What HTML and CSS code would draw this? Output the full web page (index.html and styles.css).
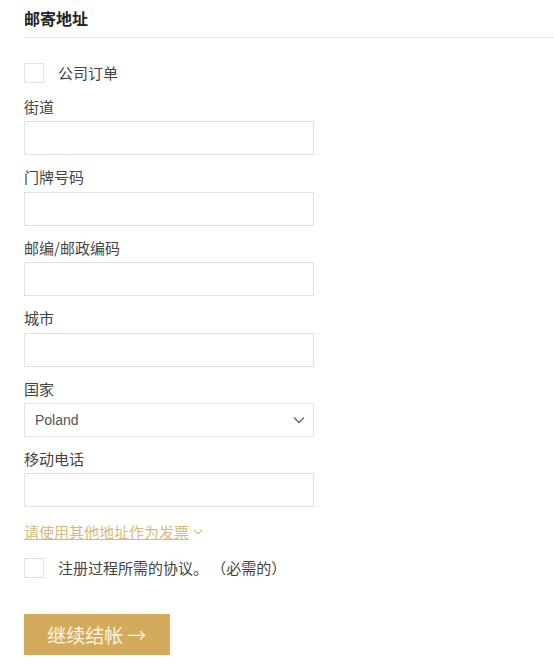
FILE: index.html
```html
<!DOCTYPE html>
<html lang="zh">
<head>
    <meta charset="UTF-8">
    <meta name="viewport" content="width=device-width, initial-scale=1.0">
    <title>邮寄地址</title>
    <link rel="stylesheet" href="styles.css">
</head>
<body>
    <div class="container">
        <h2 class="section-title">邮寄地址</h2>

        <form id="address-form">
            <label class="check-row company">
                <span class="box"></span>
                <span>公司订单</span>
            </label>

            <div class="field">
                <label>街道</label>
                <input type="text">
            </div>
            <div class="field">
                <label>门牌号码</label>
                <input type="text">
            </div>
            <div class="field">
                <label>邮编/邮政编码</label>
                <input type="text">
            </div>
            <div class="field">
                <label>城市</label>
                <input type="text">
            </div>
            <div class="field">
                <label>国家</label>
                <div class="select">
                    <span>Poland</span>
                    <svg width="12" height="8" viewBox="0 0 12 8"><path d="M1 1.5l5 5 5-5" fill="none" stroke="#666" stroke-width="1.3"/></svg>
                </div>
            </div>
            <div class="field">
                <label>移动电话</label>
                <input type="text">
            </div>

            <a class="invoice-link" href="#"><span>请使用其他地址作为发票</span>
                <svg width="10" height="6" viewBox="0 0 10 6"><path d="M1 1l4 4 4-4" fill="none" stroke="#d9b97a" stroke-width="1.1"/></svg>
            </a>

            <label class="check-row terms">
                <span class="box"></span>
                <span>注册过程所需的协议。 （必需的）</span>
            </label>

            <button type="submit">继续结帐 →</button>
        </form>
    </div>
</body>
</html>
```

FILE: styles.css
```css
body {
    font-family: "Noto Sans CJK SC", "Noto Sans", sans-serif;
    background-color: #fff;
    color: #333;
    margin: 0;
}

.container {
    padding-left: 24px;
}

.section-title {
    font-size: 16px;
    font-weight: bold;
    line-height: 22px;
    color: #222;
    margin: 0;
    padding: 7px 0 8px;
    border-bottom: 1px solid #e6e6e6;
}

.check-row {
    display: flex;
    align-items: center;
    gap: 14px;
    font-size: 15px;
    color: #444;
}

.company {
    margin: 24px 0 14px;
}

.box {
    width: 18px;
    height: 18px;
    border: 1px solid #e2e2e2;
    background: #fff;
}

.field {
    margin-bottom: 12px;
}

.field label {
    display: block;
    font-size: 15px;
    line-height: 20.4px;
    color: #444;
    margin-bottom: 4px;
}

.field input,
.select {
    box-sizing: border-box;
    width: 290px;
    height: 34px;
    border: 1px solid #e2e2e2;
    margin: 0;
    padding: 0 10px;
}

.select {
    display: flex;
    align-items: center;
    justify-content: space-between;
    font-family: "Liberation Sans", Arial, sans-serif;
    font-size: 14px;
    color: #555;
    padding-right: 8px;
}

.invoice-link {
    display: inline-flex;
    align-items: center;
    gap: 4px;
    font-size: 15px;
    color: #d9b97a;
}

.invoice-link span {
    text-decoration: underline;
}

.terms {
    margin: 14px 0 36px;
}

button {
    background-color: #d4aa5c;
    color: #fdf5e4;
    font-family: inherit;
    font-size: 19px;
    border: none;
    width: 146px;
    height: 41px;
    cursor: pointer;
}

button:hover {
    background-color: #c99d4f;
}
```
